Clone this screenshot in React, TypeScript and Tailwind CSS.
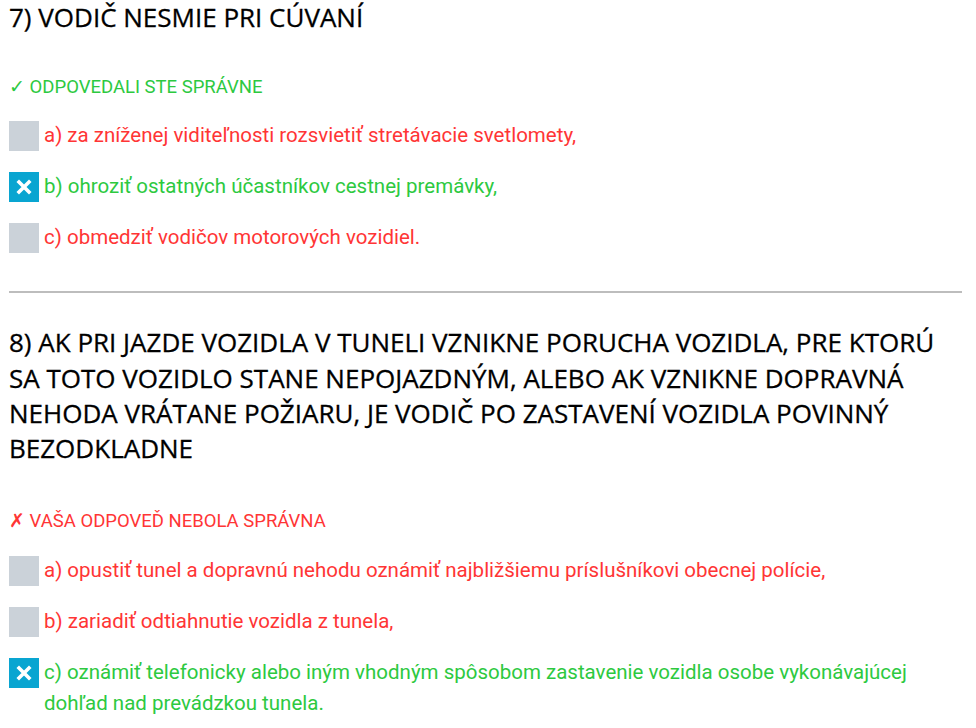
const questions = [
  {
    title: "7) VODIČ NESMIE PRI CÚVANÍ",
    correct: true,
    answers: [
      { text: "a) za zníženej viditeľnosti rozsvietiť stretávacie svetlomety,", checked: false, right: false },
      { text: "b) ohroziť ostatných účastníkov cestnej premávky,", checked: true, right: true },
      { text: "c) obmedziť vodičov motorových vozidiel.", checked: false, right: false },
    ],
  },
  {
    title:
      "8) AK PRI JAZDE VOZIDLA V TUNELI VZNIKNE PORUCHA VOZIDLA, PRE KTORÚ SA TOTO VOZIDLO STANE NEPOJAZDNÝM, ALEBO AK VZNIKNE DOPRAVNÁ NEHODA VRÁTANE POŽIARU, JE VODIČ PO ZASTAVENÍ VOZIDLA POVINNÝ BEZODKLADNE",
    correct: false,
    answers: [
      { text: "a) opustiť tunel a dopravnú nehodu oznámiť najbližšiemu príslušníkovi obecnej polície,", checked: false, right: false },
      { text: "b) zariadiť odtiahnutie vozidla z tunela,", checked: false, right: false },
      {
        text: "c) oznámiť telefonicky alebo iným vhodným spôsobom zastavenie vozidla osobe vykonávajúcej dohľad nad prevádzkou tunela.",
        checked: true,
        right: true,
      },
    ],
  },
];

function Box({ checked }: { checked: boolean }) {
  if (!checked) return <div className="w-[30px] h-[30px] shrink-0 bg-[#cbd2d9]" />;
  return (
    <div className="w-[30px] h-[30px] shrink-0 bg-[#09a5d1] flex items-center justify-center">
      <svg width="16" height="16" viewBox="0 0 16 16">
        <path d="M3 3 L13 13 M13 3 L3 13" stroke="white" strokeWidth="3.6" strokeLinecap="square" />
      </svg>
    </div>
  );
}

export default function App() {
  return (
    <div className="bg-white min-h-screen pl-[9px] pr-[14px] font-['Roboto',sans-serif]">
      {questions.map((q, i) => (
        <div key={i}>
          {i > 0 && <div className="h-[2px] bg-[#bdbdbd] mt-[38px] mb-[32px]" />}
          <h2 className="font-['Open_Sans',sans-serif] font-medium text-[26px] leading-[35.3px] text-black pr-6 [-webkit-text-stroke:0.3px_black]">
            {q.title}
          </h2>
          <div
            className={`text-[18.5px] leading-6 ${i === 0 ? "mt-[40px]" : "mt-[43px]"} ${
              q.correct ? "text-[#2dc93f]" : "text-[#ff3535]"
            }`}
          >
            {q.correct ? "✓ ODPOVEDALI STE SPRÁVNE" : "✗ VAŠA ODPOVEĎ NEBOLA SPRÁVNA"}
          </div>
          <div className={`flex flex-col gap-[21px] ${i === 0 ? "mt-[22px]" : "mt-[23px]"}`}>
            {q.answers.map((a, j) => (
              <div key={j} className="flex items-start gap-[5px]">
                <Box checked={a.checked} />
                <div
                  className={`text-[20.5px] leading-[31px] -mt-[1px] ${
                    a.right ? "text-[#2dc93f]" : "text-[#ff3535]"
                  }`}
                >
                  {a.text}
                </div>
              </div>
            ))}
          </div>
        </div>
      ))}
    </div>
  );
}
